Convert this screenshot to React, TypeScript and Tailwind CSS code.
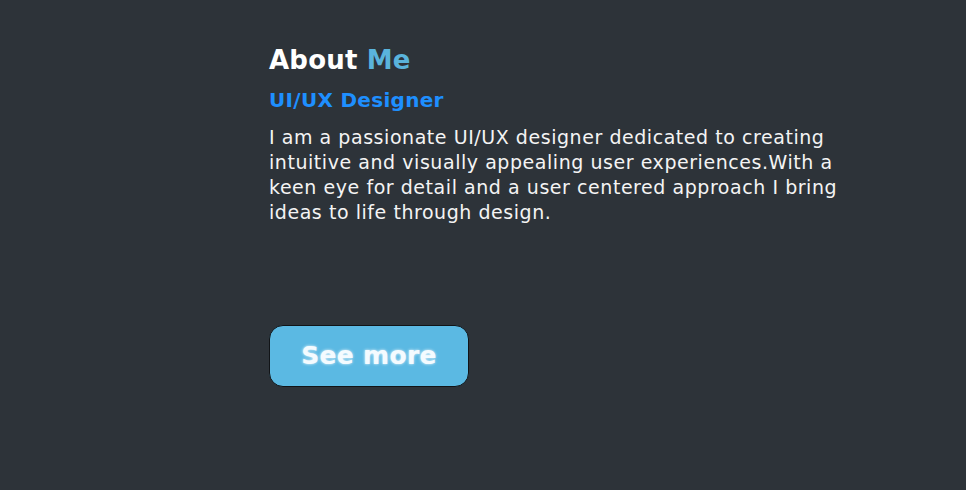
export default function App() {
  return (
    <div
      className="w-[966px] h-[490px] bg-[#2d3339] overflow-hidden"
      style={{ fontFamily: '"DejaVu Sans", "Noto Sans", sans-serif' }}
    >
      <div className="pl-[269px] pt-[42px] flex flex-col items-start">
        <h1 className="text-[26px] leading-[36px] font-semibold text-white tracking-[0.2px]">
          About <span className="text-[#5ab4dc]">Me</span>
        </h1>
        <h2 className="mt-[8px] text-[20px] leading-[28px] font-semibold text-[#1e8fff] tracking-[0.3px]">
          UI/UX Designer
        </h2>
        <p className="mt-[11px] text-[19px] leading-[25px] text-[#f4f4f4] tracking-[0.55px] whitespace-nowrap">
          I am a passionate UI/UX designer dedicated to creating
          <br />
          intuitive and visually appealing user experiences.With a
          <br />
          keen eye for detail and a user centered approach I bring
          <br />
          ideas to life through design.
        </p>
        <button className="mt-[100px] w-[200px] h-[62px] rounded-[14px] bg-[#5bb9e3] border-[1.5px] border-[#111417] text-[#f4fbff] text-[25px] font-bold [text-shadow:0_0_3px_rgba(255,255,255,0.9)] tracking-[0.3px]">
          See more
        </button>
      </div>
    </div>
  );
}
